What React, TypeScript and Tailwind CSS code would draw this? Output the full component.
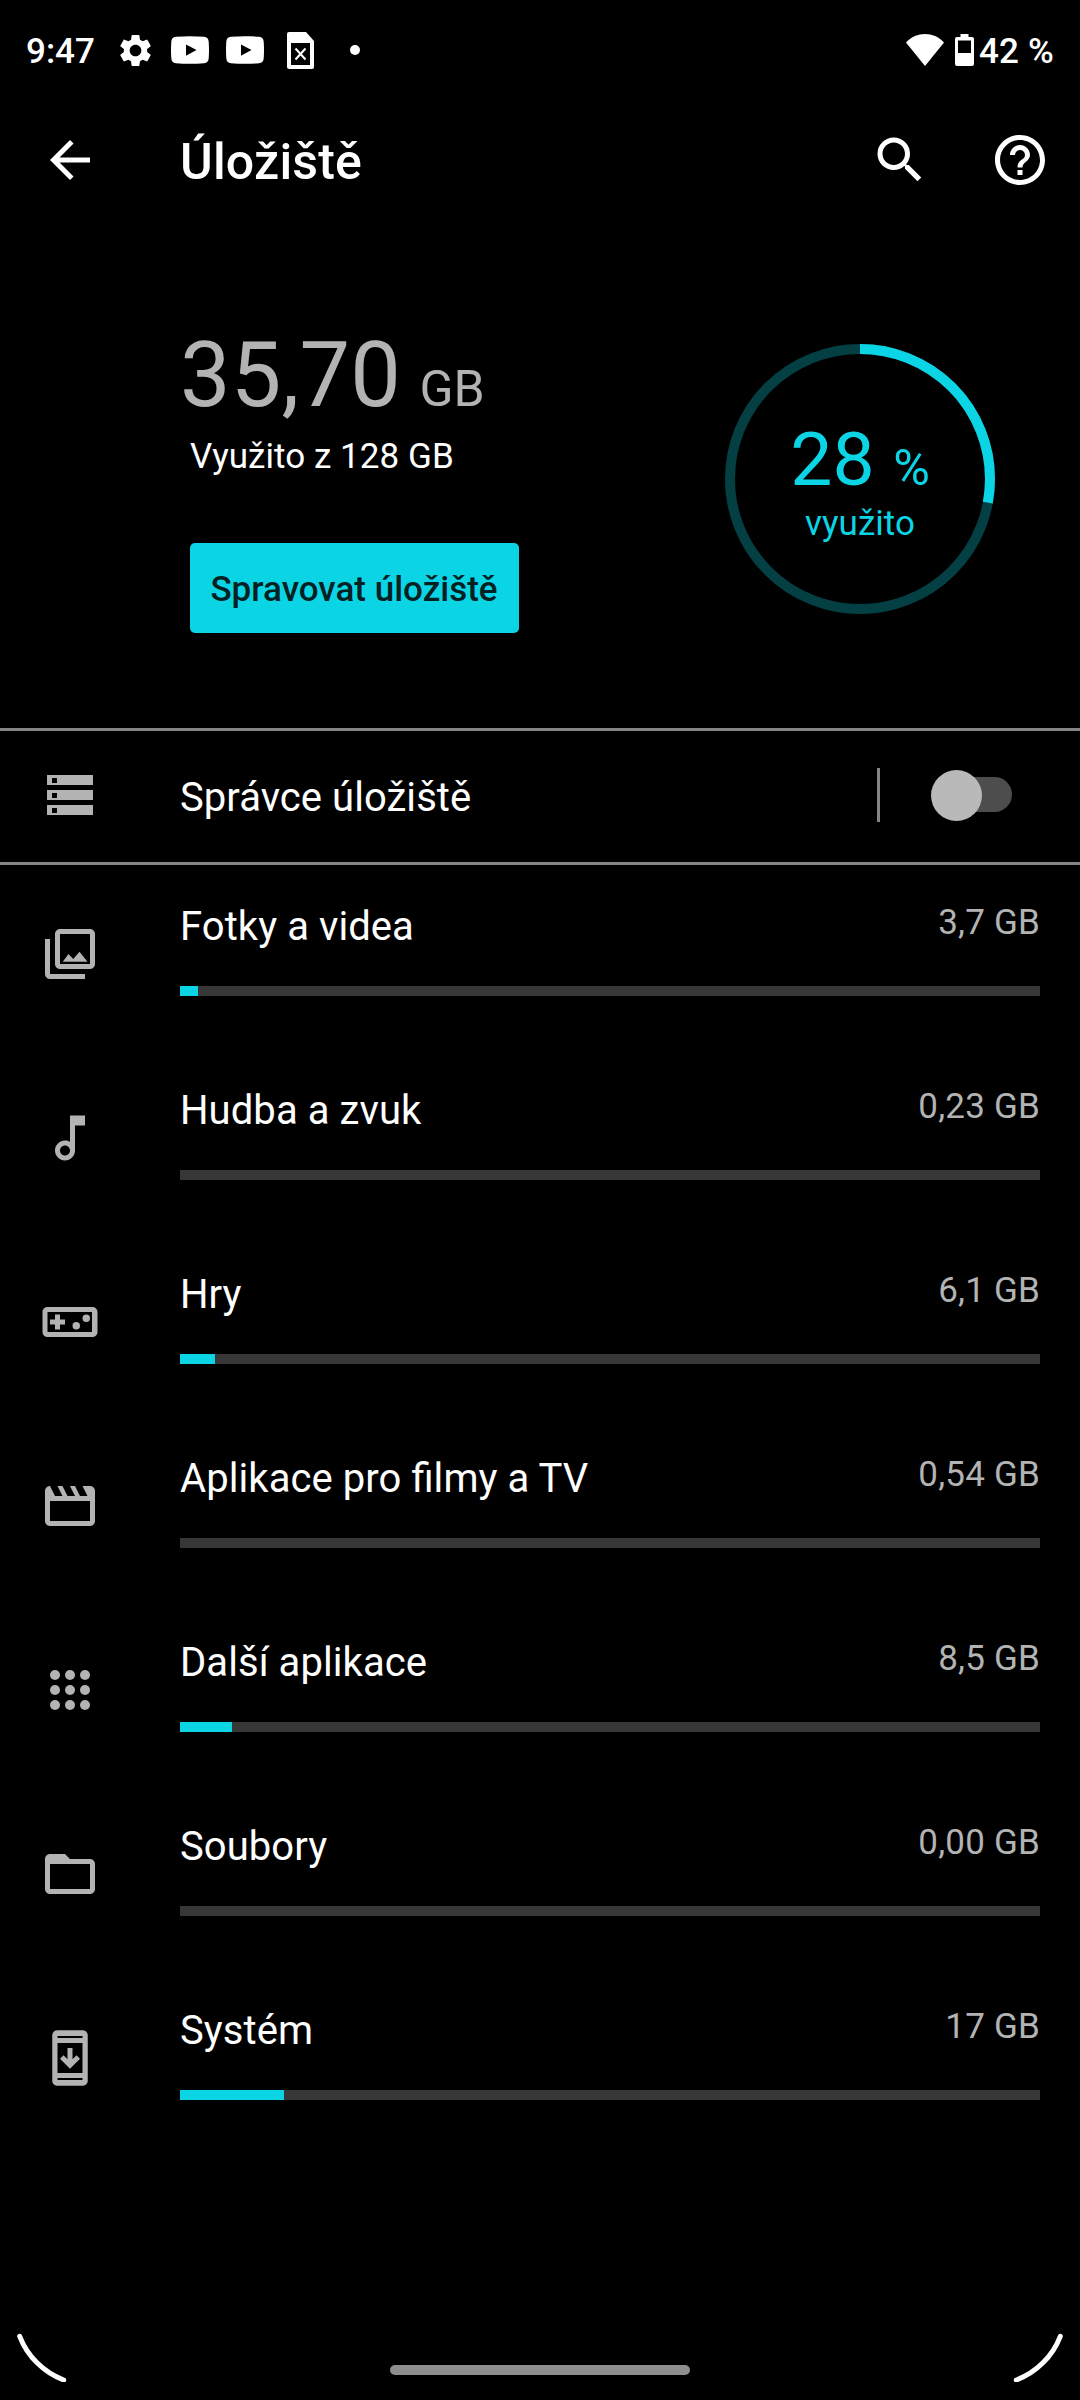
import type { ReactNode } from 'react';
import { MdArrowBack, MdFolderOpen, MdHelpOutline, MdSearch, MdSettings } from 'react-icons/md';

type Category = {
  title: string;
  size: string;
  used: number;
  icon: ReactNode;
};

function Icon({ children }: { children: ReactNode }) {
  return (
    <svg viewBox="0 0 24 24" fill="currentColor" className="size-[60px]">
      {children}
    </svg>
  );
}

const categories: Category[] = [
  {
    title: 'Fotky a videa',
    size: '3,7 GB',
    used: 18,
    icon: (
      <Icon>
        <path d="M2 6h2v14h14v2H4c-1.1 0-2-.9-2-2z" />
        <path
          fillRule="evenodd"
          d="M8 2h12c1.1 0 2 .9 2 2v12c0 1.1-.9 2-2 2H8c-1.1 0-2-.9-2-2V4c0-1.1.9-2 2-2zm0 2v12h12V4z"
        />
        <path d="M9.1 15.1l2.3-3.1 1.9 2 2.5-2.9 3.2 4z" />
      </Icon>
    ),
  },
  {
    title: 'Hudba a zvuk',
    size: '0,23 GB',
    used: 0,
    icon: (
      <Icon>
        <path d="M12 3v10.55c-.59-.34-1.27-.55-2-.55-2.21 0-4 1.79-4 4s1.79 4 4 4 4-1.79 4-4V7h4V3h-6zm-2 16c-1.1 0-2-.9-2-2s.9-2 2-2 2 .9 2 2-.9 2-2 2z" />
      </Icon>
    ),
  },
  {
    title: 'Hry',
    size: '6,1 GB',
    used: 35,
    icon: (
      <Icon>
        <path d="M21 6H3c-1.1 0-2 .9-2 2v8c0 1.1.9 2 2 2h18c1.1 0 2-.9 2-2V8c0-1.1-.9-2-2-2zm-.2 10H3V8h17.8v8zM6 15h2v-2h2v-2H8V9H6v2H4v2h2z" />
        <circle cx="14.5" cy="13.5" r="1.5" />
        <circle cx="18.5" cy="10.5" r="1.5" />
      </Icon>
    ),
  },
  {
    title: 'Aplikace pro filmy a TV',
    size: '0,54 GB',
    used: 0,
    icon: (
      <Icon>
        <path
          fillRule="evenodd"
          d="M4 4l2 4h3L7 4h2l2 4h3l-2-4h2l2 4h3l-2-4h3c1.1 0 2 .9 2 2v12c0 1.1-.9 2-2 2H4c-1.1 0-2-.9-2-2V6c0-1.1.9-2 2-2zm0 6v8h16v-8z"
        />
      </Icon>
    ),
  },
  {
    title: 'Další aplikace',
    size: '8,5 GB',
    used: 52,
    icon: (
      <Icon>
        {[6, 12, 18].map((cy) => [6, 12, 18].map((cx) => <circle key={`${cx}-${cy}`} cx={cx} cy={cy} r="2" />))}
      </Icon>
    ),
  },
  {
    title: 'Soubory',
    size: '0,00 GB',
    used: 0,
    icon: <MdFolderOpen className="size-[60px]" />,
  },
  {
    title: 'Systém',
    size: '17 GB',
    used: 104,
    icon: (
      <Icon>
        <path
          fillRule="evenodd"
          d="M7 .9h10c1.2 0 2.1.9 2.1 2v18.2c0 1.1-.9 2-2.1 2H7c-1.2 0-2.1-.9-2.1-2V2.9c0-1.1.9-2 2.1-2zm0 2.3v.8h10v-.8zM7 6v12h10V6zm0 14v.8h10V20z"
        />
        <path d="M16 12.3l-4 4-4-4 1.4-1.4 1.6 1.6V8h2v4.5l1.6-1.6z" />
      </Icon>
    ),
  },
];

function YoutubeIcon() {
  return (
    <svg viewBox="0 0 38 28" className="h-7 w-[38px]">
      <path
        fill="#fff"
        fillRule="evenodd"
        d="M5 .7C14 0 24 0 33 .7c3.200.3 4.500 1.800 4.700 5 .4 5.500.4 11 0 16.600-.2 3.200-1.500 4.700-4.700 5-9 .7-19 .7-28 0-3.200-.3-4.500-1.800-4.700-5C-.1 16.800-.1 11.200.3 5.700.5 2.500 1.800 1 5 .7zM15 8.500v11.200l10.500-5.600z"
      />
    </svg>
  );
}

function StatusBar() {
  return (
    <div className="flex h-[100px] items-center pl-[26px] pr-[26px] text-[35px] font-medium leading-[42px]">
      <span className="w-[90px] pt-[3px]">9:47</span>
      <MdSettings className="size-[39px]" />
      <div className="ml-4 flex gap-[17px]">
        <YoutubeIcon />
        <YoutubeIcon />
      </div>
      <svg viewBox="0 0 27 37" className="ml-[23px] h-[37px] w-[27px]">
        <path fill="#fff" fillRule="evenodd" d="M2 0h17l8 9v26q0 2-2 2H2q-2 0-2-2V2q0-2 2-2zM4 11v22h19V11z" />
        <path d="M8.500 16.500l10 11M18.500 16.500l-10 11" stroke="#fff" strokeWidth="2" />
      </svg>
      <span className="ml-9 size-2.5 rounded-full bg-white" />
      <svg viewBox="0 0 38 32" className="ml-auto h-8 w-[38px]">
        <path fill="#fff" d="M0 8.500C10.500-2.800 27.500-2.800 38 8.500L19 32z" />
      </svg>
      <svg viewBox="0 0 19 32" className="ml-[11px] h-8 w-[19px]">
        <path fill="#fff" fillRule="evenodd" d="M5.500 0h8v3H17q2 0 2 2v25q0 2-2 2H2q-2 0-2-2V5q0-2 2-2h3.500zM3 6.500V19h13V6.500z" />
      </svg>
      <span className="ml-[5px] pt-[3px] tracking-[0.2px]">42 %</span>
    </div>
  );
}

function Header() {
  return (
    <header className="flex h-[120px] items-center pl-10 pr-[30px]">
      <MdArrowBack className="size-[60px]" />
      <h1 className="ml-20 pt-1 text-[50px] font-medium leading-[60px] tracking-[0.2px]">Úložiště</h1>
      <MdSearch className="ml-auto size-[60px]" />
      <MdHelpOutline className="ml-[60px] size-[60px]" />
    </header>
  );
}

function UsageRing() {
  return (
    <div className="relative mt-[124px] size-[270px]">
      <svg viewBox="0 0 270 270" fill="none" strokeWidth="10" className="size-full -rotate-90">
        <circle cx="135" cy="135" r="130" stroke="#033f43" />
        <circle cx="135" cy="135" r="130" stroke="#0bd4e4" pathLength="100" strokeDasharray="27.9 100" />
      </svg>
      <div className="absolute inset-0 flex flex-col items-center pt-[70px] text-[#0bd4e4]">
        <div className="h-[89px] text-[75px] leading-[90px]">
          28 <span className="text-[50px]">%</span>
        </div>
        <div className="text-[35px] leading-[42px]">využito</div>
      </div>
    </div>
  );
}

function Summary() {
  return (
    <section className="flex h-[508px] justify-between pl-[180px] pr-[85px]">
      <div className="pt-[106px]">
        <div className="h-[100px] text-[90px] leading-[100px] tracking-[0.2px] text-[#b3b3b3]">
          35,70 <span className="-ml-1 text-[50px] tracking-normal">GB</span>
        </div>
        <div className="ml-2.5 mt-2.5 text-[35px] leading-[42px] tracking-[0.05px]">Využito z 128 GB</div>
        <button className="ml-2.5 mt-[65px] block h-[90px] w-[329px] rounded-[5px] bg-[#0bd4e4] pr-px pt-[3px] text-[35px] font-medium leading-[42px] text-[#032022]">
          Spravovat úložiště
        </button>
      </div>
      <UsageRing />
    </section>
  );
}

function StorageManager() {
  return (
    <section className="flex h-[137px] items-center border-y-[3px] border-[#858585] pb-[3px]">
      <div className="flex w-[180px] flex-col gap-[5px] pl-[47px]">
        {[0, 1, 2].map((i) => (
          <div key={i} className="flex h-2.5 w-[46px] items-center bg-[#b3b3b3] pl-[5px]">
            <span className="size-[5px] bg-black" />
          </div>
        ))}
      </div>
      <span className="pt-1.5 text-[40px] leading-[48px] tracking-[0.05px]">Správce úložiště</span>
      <div className="ml-auto h-[54px] w-[3px] bg-[#858585]" />
      <div className="-mt-px ml-[54px] mr-[68px] flex h-[35px] w-[78px] items-center rounded-full bg-[#4d4d4d]">
        <span className="-ml-[3px] mt-px size-[51px] shrink-0 rounded-full bg-[#b9b9b9]" />
      </div>
    </section>
  );
}

function CategoryRow({ category }: { category: Category }) {
  return (
    <li className="flex h-[184px] pr-10">
      <div className="w-[180px] shrink-0 pl-10 pt-[59px] text-[#b3b3b3]">{category.icon}</div>
      <div className="flex-1 pt-[37px]">
        <div className="flex h-[84px] justify-between">
          <span className="pt-px text-[40px] leading-[48px] tracking-[0.07px] [font-feature-settings:'liga']">
            {category.title}
          </span>
          <span className="text-[35px] leading-[42px] tracking-[0.2px] text-[#b3b3b3]">{category.size}</span>
        </div>
        <div className="h-2.5 bg-[#373737]">
          <div className="h-full bg-[#0bd4e4]" style={{ width: category.used }} />
        </div>
      </div>
    </li>
  );
}

function NavigationBar() {
  return (
    <footer className="mt-auto flex h-[70px] items-start justify-between px-4 text-white">
      <svg viewBox="0 0 52 52" fill="none" stroke="currentColor" strokeWidth="5" strokeLinecap="round" className="size-[52px]">
        <path d="M3.700 6.300A76 76 0 0 0 47.700 50" />
      </svg>
      <div className="mt-[35px] h-2.5 w-[300px] rounded-full bg-[#8e8e8e]" />
      <svg viewBox="0 0 52 52" fill="none" stroke="currentColor" strokeWidth="5" strokeLinecap="round" className="size-[52px]">
        <path d="M48.300 6.300A76 76 0 0 1 4.300 50" />
      </svg>
    </footer>
  );
}

export default function App() {
  return (
    <div className="flex h-[2400px] w-[1080px] flex-col overflow-hidden bg-black font-[Roboto,sans-serif] text-white">
      <StatusBar />
      <Header />
      <Summary />
      <StorageManager />
      <ul>
        {categories.map((category) => (
          <CategoryRow key={category.title} category={category} />
        ))}
      </ul>
      <NavigationBar />
    </div>
  );
}
